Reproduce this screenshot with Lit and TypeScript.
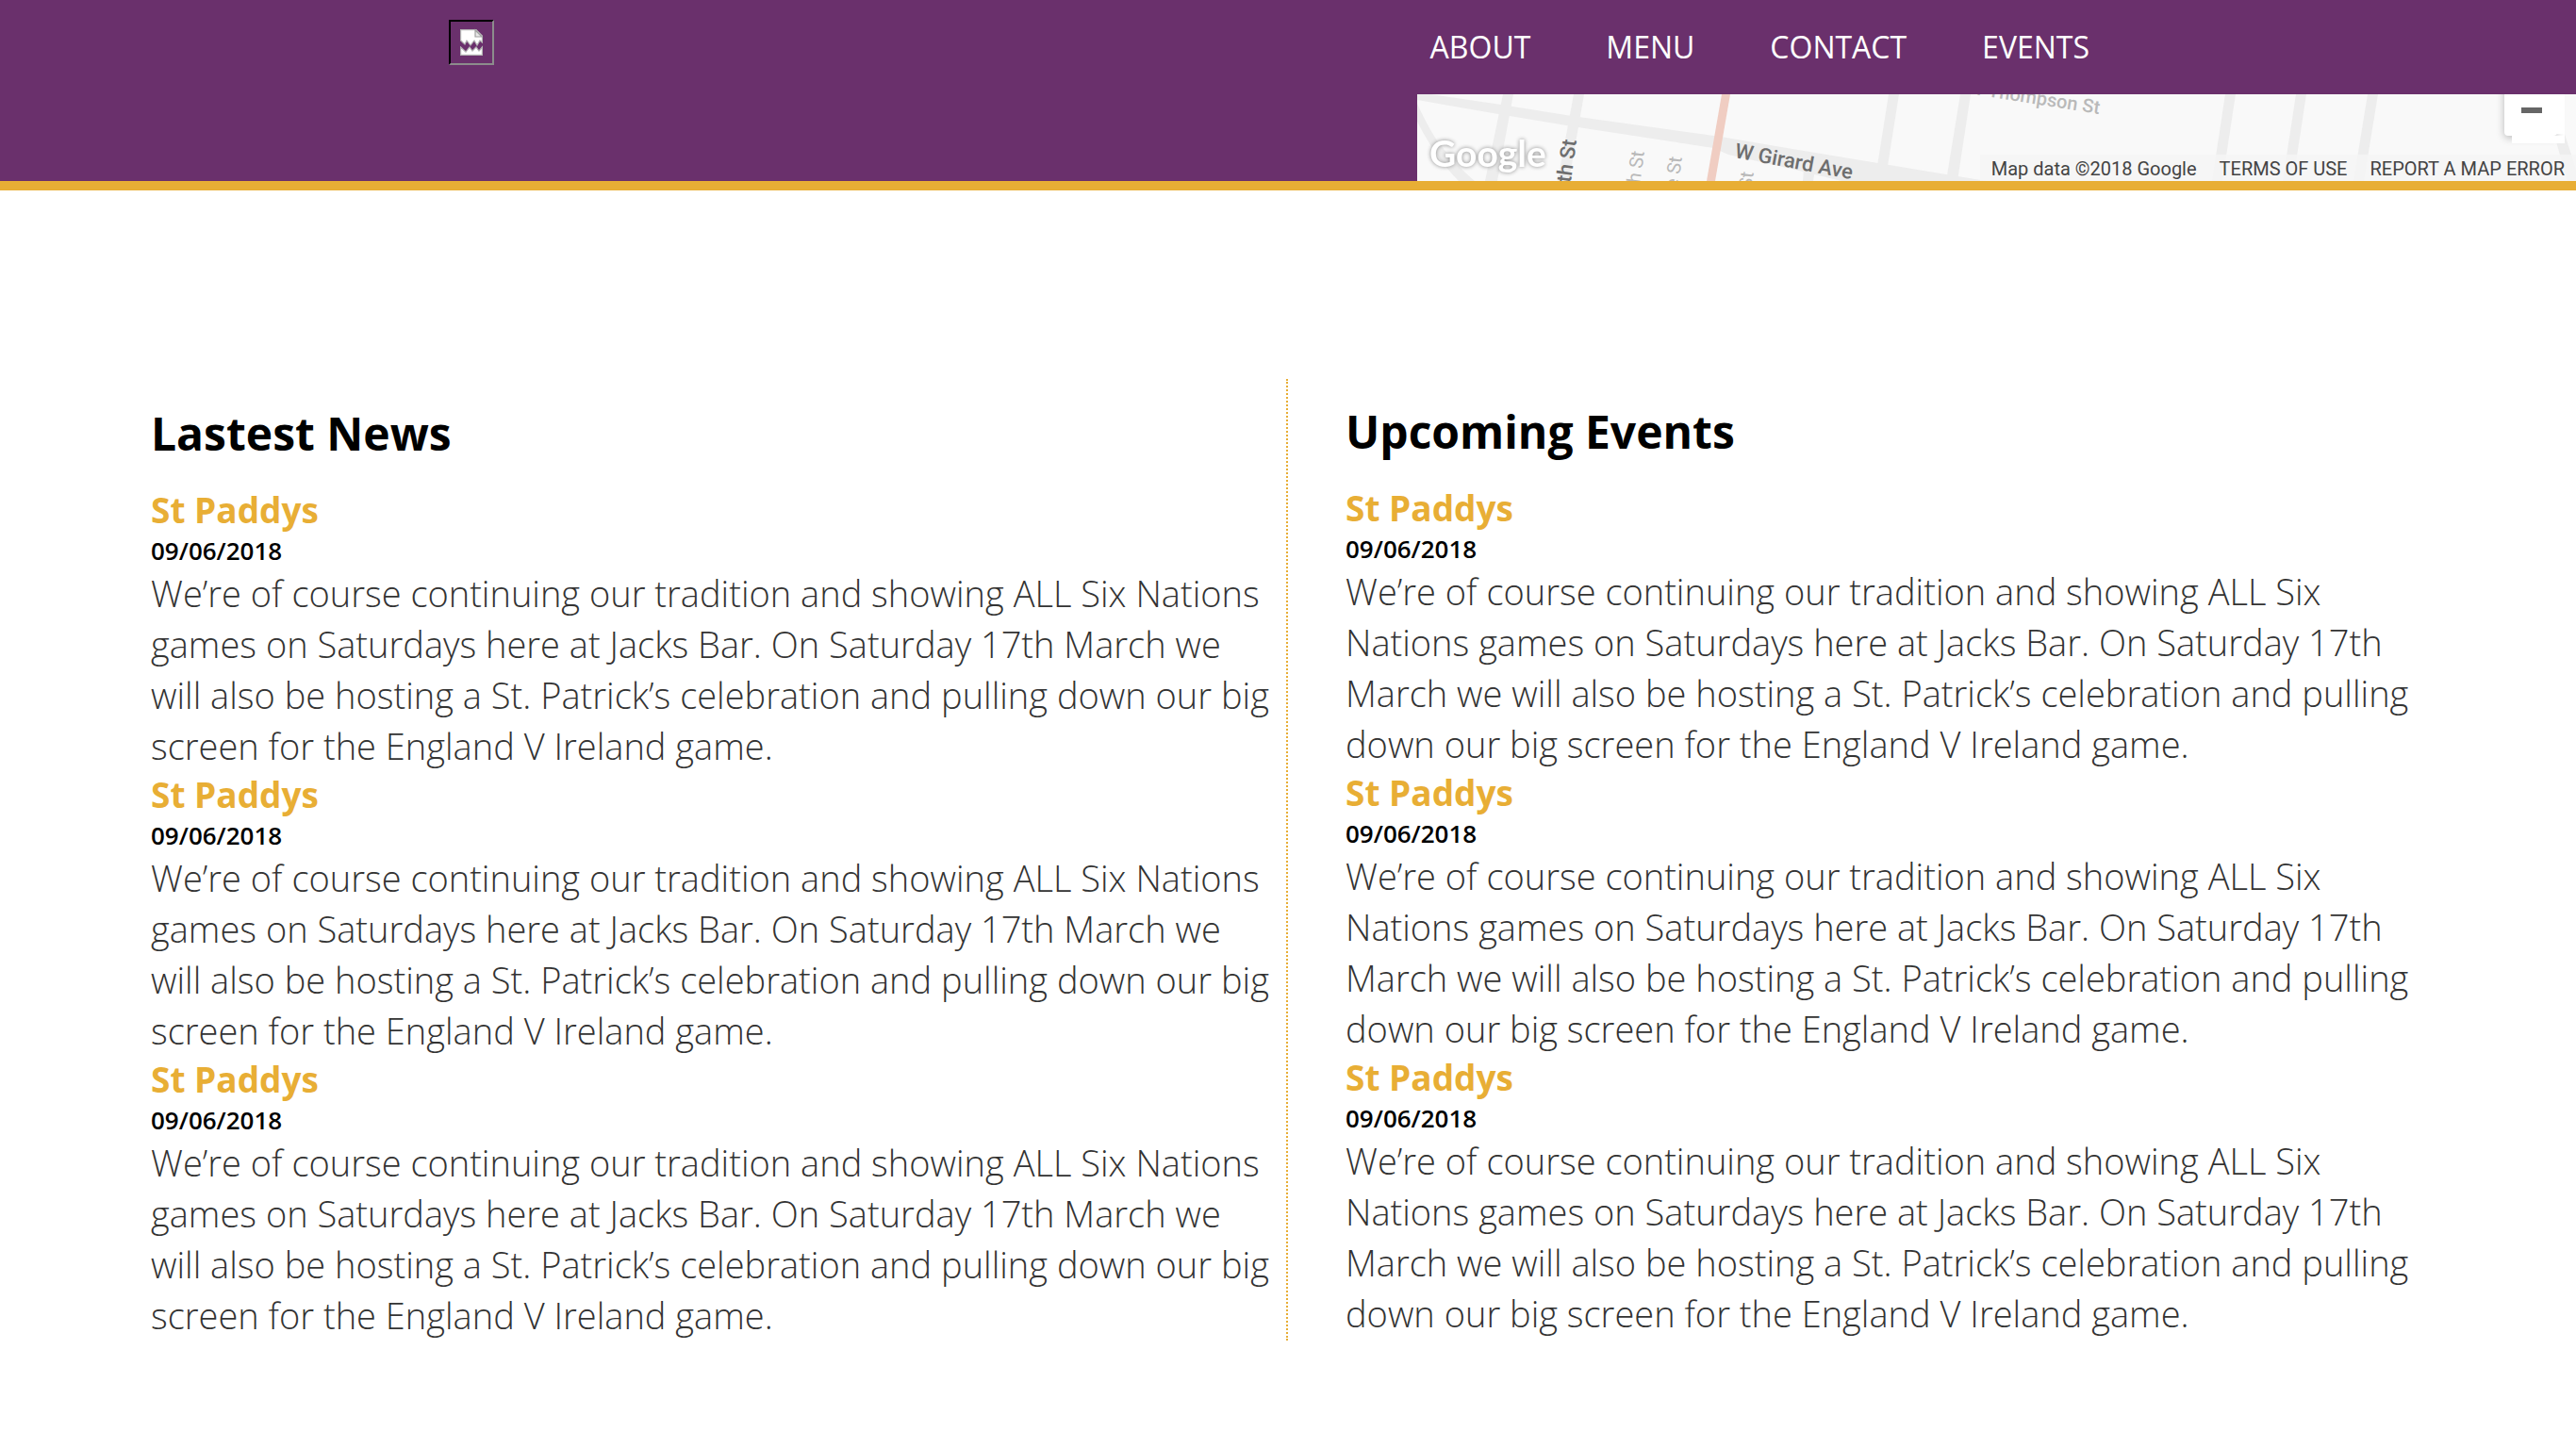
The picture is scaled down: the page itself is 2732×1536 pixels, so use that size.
import { LitElement, html, css, svg } from "lit";
import { customElement, property } from "lit/decorators.js";

interface Entry { title: string; date: string; text: string; }

const entry: Entry = {
  title: "St Paddys",
  date: "09/06/2018",
  text: "We’re of course continuing our tradition and showing ALL Six Nations games on Saturdays here at Jacks Bar. On Saturday 17th March we will also be hosting a St. Patrick’s celebration and pulling down our big screen for the England V Ireland game.",
};
const entries: Entry[] = [entry, entry, entry];

@customElement("entry-list")
class EntryList extends LitElement {
  @property() heading = "";
  @property({ attribute: false }) entries: Entry[] = [];
  static styles = css`
    :host { display: block; }
    h2, h3, p { margin: 0; }
    .heading { font-size: 48px; line-height: 66px; font-weight: 700; margin-bottom: 23px; }
    .title { font-size: 37px; line-height: 50px; font-weight: 700; color: #e8ae35; }
    .date { display: block; font-size: 26px; line-height: 36px; font-weight: 600; }
    .text { font-size: 38px; line-height: 54px; font-weight: 300; color: #333; }
  `;
  render() {
    return html`
      <h2 class="heading">${this.heading}</h2>
      ${this.entries.map((e) => html`
        <article>
          <h3 class="title">${e.title}</h3>
          <time class="date">${e.date}</time>
          <p class="text">${e.text}</p>
        </article>`)}
    `;
  }
}

const streets = svg`
  <g fill="#ededed">
    <path d="M0 0H14L89 11 164 23 322 45 398 58 561 85 604 92H450L409 82 330 64 314 57 164 34 86 21 0 6Z"/>
    <path d="M91 0H102L85 92H72Z"/>
    <path d="M166 0H177L161 92H149Z"/>
    <path d="M0 10Q14 40 24 53 42 76 61 92H44Q20 68 0 29Z"/>
    <path d="M500 0H511L499 76H488Z"/>
    <path d="M576 0H587L573 92H561Z"/>
    <path d="M410 80H422L420 92H409Z"/>
    <path d="M857 0H868L854 92H843Z"/>
    <path d="M932 0H943L929 92H918Z"/>
    <path d="M1008 0H1019L1004 92H993Z"/>
    <path d="M1202 30H1213L1224 64 1230 84V92H1220Z"/>
  </g>
  <path fill="#f0cdc2" d="M323 0H332L316 92H307Z"/>
`;

@customElement("street-map")
class StreetMap extends LitElement {
  static styles = css`
    :host { display: block; position: relative; overflow: hidden; background: #f9f9f9; font-family: Roboto, sans-serif; }
    .streets { display: block; height: 92px; width: 1230px; }
    .major { fill: #6e6e6e; font-size: 22px; font-weight: 500; }
    .minor { fill: #b9b9b9; font-size: 20px; }
    .google { fill: #fff; font-family: Lato, sans-serif; font-size: 39px; font-weight: 700; filter: drop-shadow(0 0 2px #888); }
    .backing { position: absolute; top: 0; right: 12px; width: 56px; height: 52px; background: #fff; }
    .zoom { position: absolute; top: -12px; right: 20px; width: 56px; height: 56px; padding: 0; border: 0; border-radius: 4px; background: #fff; box-shadow: 0 2px 8px #0004; }
    .zoom svg { display: block; width: 56px; height: 56px; }
    .cover { position: absolute; top: 0; right: 12px; width: 10px; height: 42px; background: #fff; }
    .cover-bottom { position: absolute; top: 44px; right: 12px; width: 56px; height: 8px; background: #fff; }
    .legal { position: absolute; right: 0; bottom: 0; display: flex; font-size: 20px; line-height: 26px; color: #444; white-space: nowrap; }
    .legal > * { padding: 2px 12px 0; color: inherit; text-decoration: none; background: #f5f5f5cc; }
  `;
  render() {
    return html`
      <svg class="streets" viewBox="0 0 1230 92" role="img" aria-label="Map">
        ${streets}
        <text class="major" transform="translate(336 67) rotate(10.5)">W Girard Ave</text>
        <text class="major" text-anchor="end" transform="translate(169 49) rotate(-82)">9th St</text>
        <text class="minor" text-anchor="end" transform="translate(241 61) rotate(-82)">8th St</text>
        <text class="minor" text-anchor="end" transform="translate(281 67) rotate(-82)">Darie St</text>
        <text class="minor" text-anchor="end" transform="translate(357 83) rotate(-82)">7th St</text>
        <text class="minor" text-anchor="end" font-weight="500" transform="translate(723 21) rotate(9)">W Thompson St</text>
        <text class="google" x="13" y="77">Google</text>
      </svg>
      <div class="backing"></div>
      <button class="zoom" aria-label="Zoom out">
        <svg viewBox="0 0 56 56"><rect x="18" y="26" width="22" height="6" fill="#666"/></svg>
      </button>
      <div class="cover"></div>
      <div class="cover-bottom"></div>
      <div class="legal"><span>Map data ©2018 Google</span><a href="#terms">TERMS OF USE</a><a href="#report">REPORT A MAP ERROR</a></div>
    `;
  }
}

@customElement("app-root")
class AppRoot extends LitElement {
  static styles = css`
    :host { display: block; font-family: "Open Sans", sans-serif; background: #fff; color: #000; }
    .header { display: grid; grid-template-columns: 55% 45%; background: #6a306c; border-bottom: 10px solid #e8ae35; }
    .brand { padding: 21px 0 0 476px; }
    .logo { display: block; width: 48px; height: 48px; }
    .nav { display: flex; gap: 80px; height: 100px; padding-left: 14px; align-items: center; }
    .link { color: #fff; font-size: 32px; line-height: 44px; text-decoration: none; }
    .main { display: grid; grid-template-columns: 1fr 1fr; padding: 200px 160px 80px; align-items: start; }
    .news { padding: 25px 12px 0 0; border-right: 2px dotted #e8ae35; }
    .events { padding: 23px 0 0 61px; }
  `;
  render() {
    return html`
      <header class="header">
        <div class="brand">
          <svg class="logo" viewBox="0 0 48 48" role="img" aria-label="Logo">
            <path d="M0 0H48L46 2H2V46L0 48Z" fill="#000"/>
            <path d="M48 0V48H0L2 46H46V2Z" fill="#8c8c8c"/>
            <g fill="#fff" stroke="#b4b4b4" stroke-width="1.2">
              <path d="M12.6 10.6H29L35.4 17V24L33 22 30 27 27 22 23 27 19 22 17 26 12.6 22Z"/>
              <path d="M12.6 29L18 34 22 29 25 33 29 29 32 33 35.4 29V37.4H12.6Z"/>
              <path d="M28 11V18H35Z" fill="#e8e8e8" stroke="#a0a0a0"/>
            </g>
          </svg>
        </div>
        <div>
          <nav class="nav">${["About", "Menu", "Contact", "Events"].map((n) => html`<a class="link" href="#${n.toLowerCase()}">${n.toUpperCase()}</a>`)}</nav>
          <street-map></street-map>
        </div>
      </header>
      <main class="main">
        <entry-list class="news" heading="Lastest News" .entries=${entries}></entry-list>
        <entry-list class="events" heading="Upcoming Events" .entries=${entries}></entry-list>
      </main>
    `;
  }
}
